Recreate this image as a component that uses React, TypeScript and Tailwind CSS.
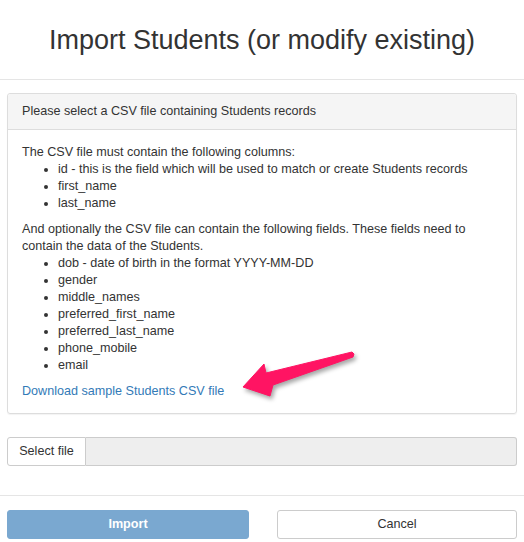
import React from "react";

const required = [
  "id - this is the field which will be used to match or create Students records",
  "first_name",
  "last_name",
];

const optional = [
  "dob - date of birth in the format YYYY-MM-DD",
  "gender",
  "middle_names",
  "preferred_first_name",
  "preferred_last_name",
  "phone_mobile",
  "email",
];

function Arrow() {
  return (
    <svg
      className="pointer-events-none absolute left-0 top-0"
      width="524"
      height="542"
      viewBox="0 0 524 542"
      aria-hidden
      style={{ filter: "drop-shadow(2px 3px 2px rgba(0,0,0,0.35))" }}
    >
      <polygon
        points="243,387 264,364 266,373 352,352 354,354 353,357 273,385 270,396"
        fill="#ff1463"
        strokeLinejoin="round"
        stroke="#ff1463"
        strokeWidth="1"
      />
    </svg>
  );
}

export default function App() {
  return (
    <div
      className="relative h-[542px] w-[524px] overflow-hidden bg-white text-[#333]"
      style={{ fontFamily: '"Liberation Sans", Arial, sans-serif' }}
    >
      <header className="flex h-[80px] items-center justify-center border-b border-[#e5e5e5] pt-[3px]">
        <h1 className="text-[27px] leading-[1.1] font-normal">Import Students (or modify existing)</h1>
      </header>

      <div className="px-[7px] pt-[13px]">
        <section className="rounded-[3px] border border-[#ddd] text-[12.6px] leading-[17px] shadow-[0_1px_1px_rgba(0,0,0,0.05)]">
          <div className="h-[36px] rounded-t-[3px] border-b border-[#ddd] bg-[#f5f5f5] px-[14px] pt-[9px]">
            Please select a CSV file containing Students records
          </div>
          <div className="px-[14px] pt-[14px] pb-[13px]">
            <p>The CSV file must contain the following columns:</p>
            <ul className="mb-[9px] list-disc pl-[36px]">
              {required.map((r) => (
                <li key={r}>{r}</li>
              ))}
            </ul>
            <p>
              And optionally the CSV file can contain the following fields. These fields need to
              contain the data of the Students.
            </p>
            <ul className="mb-[9px] list-disc pl-[36px]">
              {optional.map((r) => (
                <li key={r}>{r}</li>
              ))}
            </ul>
            <a href="#" className="text-[#337ab7]">
              Download sample Students CSV file
            </a>
          </div>
        </section>

        <div className="mt-[23px] flex h-[29px] text-[12.6px]">
          <button className="w-[79px] rounded-l-[3px] border border-[#ccc] bg-white text-[#333]">
            Select file
          </button>
          <div className="flex-1 rounded-r-[3px] border border-l-0 border-[#ccc] bg-[#eee]" />
        </div>
      </div>

      <footer className="mt-[29px] flex gap-[28px] border-t border-[#e5e5e5] px-[7px] pt-[14px] text-[12.6px]">
        <button className="h-[29px] w-[242px] rounded-[3px] border border-[#7aa8d0] bg-[#7aa8d0] font-bold text-white">
          Import
        </button>
        <button className="h-[29px] flex-1 rounded-[3px] border border-[#ccc] bg-white text-[#333]">
          Cancel
        </button>
      </footer>

      <Arrow />
    </div>
  );
}
